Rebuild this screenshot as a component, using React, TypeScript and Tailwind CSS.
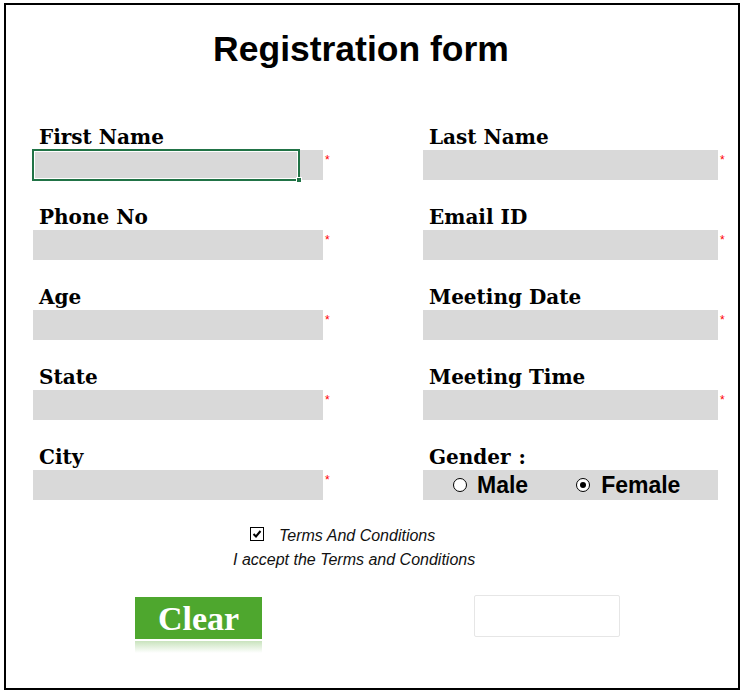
import React from "react";

const labelCls =
  "h-[24px] leading-[24px] pl-[6px] text-[20px] font-bold text-black whitespace-nowrap";
const serif = { fontFamily: '"DejaVu Serif", serif' } as React.CSSProperties;

function Star() {
  return (
    <span className="ml-[2px] mt-[4px] text-[12px] leading-[12px] text-[#ff0000]" style={{ fontFamily: '"Liberation Sans", sans-serif' }}>
      *
    </span>
  );
}

function Field({
  label,
  width,
  selected,
}: {
  label: string;
  width: number;
  selected?: boolean;
}) {
  return (
    <div className="flex flex-col">
      <div className={labelCls} style={serif}>
        <span className="relative top-[-1px]">{label}</span>
      </div>
      <div className="flex items-start">
        <div
          className={`relative h-[30px] bg-[#d9d9d9] ${width === 290 ? "w-[290px]" : "w-[295px]"}`}
        >
          {selected && (
            <div className="absolute left-[-1px] top-[-1px] w-[268px] h-[32px] border-2 border-[#217346] shadow-[inset_0_0_0_1px_#ffffff]">
              <div className="absolute right-[-4px] bottom-[-4px] w-[6px] h-[6px] bg-[#217346] border border-white" />
            </div>
          )}
        </div>
        <Star />
      </div>
    </div>
  );
}

function Radio({ checked }: { checked?: boolean }) {
  return (
    <span className="w-[14px] h-[14px] rounded-full border border-black bg-white flex items-center justify-center">
      {checked && <span className="w-[6px] h-[6px] rounded-full bg-black" />}
    </span>
  );
}

export default function App() {
  return (
    <div className="w-[742px] h-[691px] bg-white pt-[3px] pl-[4px]">
      <div className="w-[736px] h-[687px] border-2 border-black flex flex-col">
        <div
          className="mt-[24px] h-[40px] leading-[40px] text-center pr-[22px] text-[35.5px] font-bold text-black"
          style={{ fontFamily: '"Liberation Sans", Arial, sans-serif' }}
        >
          Registration form
        </div>

        <div className="mt-[57px] ml-[27px] grid grid-cols-[390px_1fr] gap-y-[26px]">
          <Field label="First Name" width={290} selected />
          <Field label="Last Name" width={295} />
          <Field label="Phone No" width={290} />
          <Field label="Email ID" width={295} />
          <Field label="Age" width={290} />
          <Field label="Meeting Date" width={295} />
          <Field label="State" width={290} />
          <Field label="Meeting Time" width={295} />
          <Field label="City" width={290} />
          <div className="flex flex-col">
            <div className={labelCls} style={serif}>
              <span className="relative top-[-1px]">
                Gender<span className="ml-[8px]">:</span>
              </span>
            </div>
            <div
              className="h-[30px] w-[295px] bg-[#d9d9d9] flex items-center pl-[30px] text-[23px] font-bold text-black"
              style={{ fontFamily: '"Liberation Sans", Arial, sans-serif' }}
            >
              <Radio />
              <span className="ml-[10px]">Male</span>
              <span className="ml-[48px] flex items-center">
                <Radio checked />
              </span>
              <span className="ml-[11px]">Female</span>
            </div>
          </div>
        </div>

        <div
          className="mt-[24px] flex flex-col italic text-[16px] text-[#111]"
          style={{ fontFamily: '"Liberation Sans", Arial, sans-serif' }}
        >
          <div className="ml-[244px] h-[20px] flex items-center">
            <span className="w-[14px] h-[14px] border border-black bg-white flex items-center justify-center not-italic">
              <svg width="10" height="10" viewBox="0 0 10 10">
                <path d="M1.5 5 L4 7.5 L8.5 2" stroke="#000" strokeWidth="2" fill="none" />
              </svg>
            </span>
            <span className="ml-[15px] mt-[4px]">Terms And Conditions</span>
          </div>
          <div className="ml-[227px] mt-[6px] h-[20px] leading-[20px]">
            I accept the Terms and Conditions
          </div>
        </div>

        <div className="mt-[25px] flex items-start">
          <div className="ml-[129px] mt-[2px] flex flex-col">
            <div
              className="w-[127px] h-[42px] bg-[#4ea72e] flex items-center justify-center text-white text-[34px] font-bold"
              style={{ fontFamily: '"Liberation Serif", serif' }}
            >
              Clear
            </div>
            <div className="mt-[2px] w-[127px] h-[12px] bg-gradient-to-b from-[#c9e3bd] to-white" />
          </div>
          <div className="ml-[212px] w-[146px] h-[42px] bg-white border border-[#e6e6e6] rounded-[2px]" />
        </div>
      </div>
    </div>
  );
}
